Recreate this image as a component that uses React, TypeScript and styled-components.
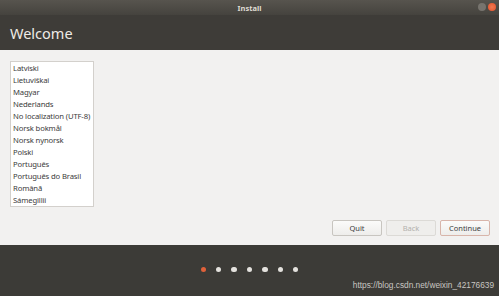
import React from "react";
import styled, { createGlobalStyle } from "styled-components";

const GlobalStyle = createGlobalStyle`
  html, body {
    margin: 0;
    padding: 0;
    background: #3c3b37;
  }
  body {
    font-family: "Noto Sans", "DejaVu Sans", sans-serif;
  }
`;

const Window = styled.div`
  width: 499px;
  height: 296px;
  display: flex;
  flex-direction: column;
  overflow: hidden;
`;

const TitleBar = styled.div`
  position: relative;
  height: 15px;
  display: flex;
  align-items: center;
  justify-content: center;
  background: linear-gradient(#57544e, #45433e);
  color: #dfdbd2;
  font-size: 7.5px;
  font-weight: bold;
`;

const WindowControls = styled.div`
  position: absolute;
  right: 3px;
  top: 3px;
  display: flex;
  gap: 2px;
`;

const ControlDot = styled.div<{ $close?: boolean }>`
  width: 8px;
  height: 8px;
  border-radius: 50%;
  background: ${(p) => (p.$close ? "radial-gradient(#f27a52, #e2502a)" : "#77746e")};
`;

const Header = styled.div`
  height: 35px;
  display: flex;
  align-items: center;
  padding-left: 10px;
  background: #3e3c38;
  color: #eeebe6;
  font-size: 14.5px;
`;

const Content = styled.div`
  flex: 1;
  background: #f2f1f0;
  display: flex;
  flex-direction: column;
  padding: 11px 9px 9px 10px;
`;

const LangList = styled.div`
  width: 82px;
  height: 144px;
  border: 1px solid #d3d0cc;
  background: #ffffff;
  overflow: hidden;
  box-sizing: content-box;
`;

const LangItem = styled.div`
  height: 12px;
  line-height: 12px;
  padding-left: 2px;
  font-size: 7.7px;
  letter-spacing: -0.15px;
  color: #3c3c3c;
  white-space: nowrap;
`;

const ButtonRow = styled.div`
  margin-top: auto;
  display: flex;
  justify-content: flex-end;
  gap: 4px;
`;

const Button = styled.div<{ $disabled?: boolean; $accent?: boolean }>`
  width: 48px;
  height: 14px;
  display: flex;
  align-items: center;
  justify-content: center;
  font-size: 7.5px;
  border-radius: 2px;
  border: 1px solid ${(p) => (p.$accent ? "#d8b5aa" : p.$disabled ? "#dcdad6" : "#c8c5c0")};
  background: ${(p) => (p.$disabled ? "#efeeec" : "linear-gradient(#fbfbfa, #eeedeb)")};
  color: ${(p) => (p.$disabled ? "#b3b1ad" : "#3c3c3c")};
`;

const Footer = styled.div`
  position: relative;
  height: 51px;
  background: #3c3b37;
  display: flex;
  align-items: center;
  justify-content: center;
`;

const Dots = styled.div`
  display: flex;
  gap: 10px;
  margin-top: -2px;
`;

const Dot = styled.div<{ $active?: boolean }>`
  width: 5.4px;
  height: 5.4px;
  border-radius: 50%;
  background: ${(p) => (p.$active ? "#e0613a" : "#e4e2de")};
`;

const Watermark = styled.div`
  position: absolute;
  right: 5px;
  bottom: 6px;
  font-family: "Liberation Sans", Arial, sans-serif;
  font-size: 8.3px;
  color: #c8c6c2;
`;

const languages = [
  "Latviski",
  "Lietuviškai",
  "Magyar",
  "Nederlands",
  "No localization (UTF-8)",
  "Norsk bokmål",
  "Norsk nynorsk",
  "Polski",
  "Português",
  "Português do Brasil",
  "Română",
  "Sámegillii",
];

const App: React.FC = () => {
  return (
    <Window>
      <GlobalStyle />
      <TitleBar>
        Install
        <WindowControls>
          <ControlDot />
          <ControlDot $close />
        </WindowControls>
      </TitleBar>
      <Header>Welcome</Header>
      <Content>
        <LangList>
          {languages.map((l) => (
            <LangItem key={l}>{l}</LangItem>
          ))}
        </LangList>
        <ButtonRow>
          <Button>Quit</Button>
          <Button $disabled>Back</Button>
          <Button $accent>Continue</Button>
        </ButtonRow>
      </Content>
      <Footer>
        <Dots>
          {[0, 1, 2, 3, 4, 5, 6].map((i) => (
            <Dot key={i} $active={i === 0} />
          ))}
        </Dots>
        <Watermark>https://blog.csdn.net/weixin_42176639</Watermark>
      </Footer>
    </Window>
  );
};

export default App;
